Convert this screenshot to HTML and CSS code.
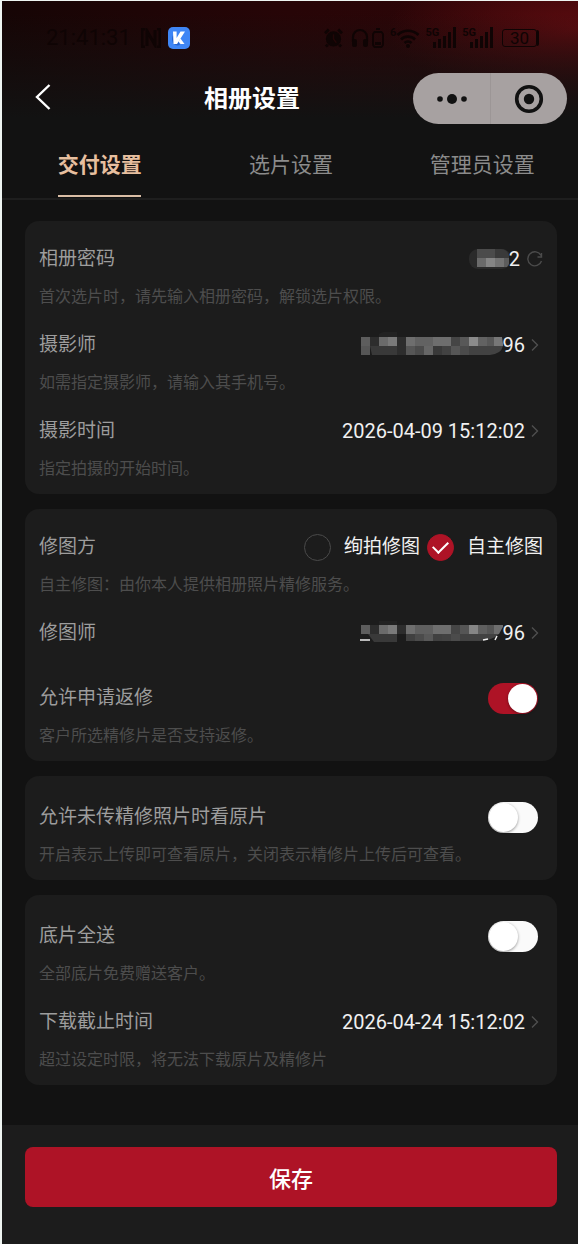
FILE: index.html
```html
<!DOCTYPE html>
<html lang="zh-CN">
<head>
<meta charset="utf-8">
<meta name="viewport" content="width=device-width, initial-scale=1">
<title>相册设置</title>
<link rel="stylesheet" href="styles.css">
</head>
<body>
<svg class="defs" aria-hidden="true">
  <symbol id="chevron" viewBox="0 0 8 14"><path d="M1 1.5 6.5 7 1 12.5" fill="none" stroke="currentColor" stroke-width="1.4"/></symbol>
  <symbol id="signal" viewBox="0 0 23 21"><path d="M0 15h3v6H0zM5 12h3v9H5zM10 9h3v12h-3zM15 5h3v16h-3zM20 0h3v21h-3z" fill="currentColor"/></symbol>
</svg>
<div class="page">
  <header class="top">
    <div class="status">
      <span class="clock">21:41:31</span>
      <svg class="nfc" viewBox="0 0 20 20" width="20" height="20"><path d="M4 1H1v18h3M16 1h3v18h-3M6 18V3l8 14V2" fill="none" stroke="currentColor" stroke-width="3"/></svg>
      <svg class="app" viewBox="0 0 22 22" width="22" height="22"><rect width="22" height="22" rx="5" fill="#3f86f5"/><path d="M5 8c-3 6 1 12 7 10l-2-4z" fill="#2563cf"/><path d="M5 4.500h3.600v6.500L12.500 4.500H17L9 17H5.500z" fill="#fff"/><path d="m12.500 11.500 4 5.500h-4l-2-2.500z" fill="#fff"/></svg>
      <div class="indicators">
        <svg class="alarm" viewBox="0 0 20 20" width="19" height="20"><circle cx="10" cy="11" r="8" fill="currentColor"/><path d="m1 5 4-4M19 5l-4-4M4 17l-2 2M16 17l2 2" stroke="currentColor" stroke-width="3"/><path d="M10 6v5l3 4" fill="none" stroke="#220607" stroke-width="1.500"/></svg>
        <svg class="phones" viewBox="0 0 18 20" width="18" height="20"><path d="M2 14V9a7 7 0 0 1 14 0v5" fill="none" stroke="currentColor" stroke-width="2.200"/><rect x="1" y="11" width="5" height="8" rx="2" fill="currentColor"/><rect x="12" y="11" width="5" height="8" rx="2" fill="currentColor"/></svg>
        <svg viewBox="0 0 12 20" width="12" height="20"><path d="M4 1h4M2.500 4h7L11 6v11l-1.500 2h-7L1 17V6z" fill="none" stroke="currentColor" stroke-width="1.800"/><path d="M3 14h6v3H3z" fill="currentColor"/></svg>
        <span class="tiny six">6</span>
        <svg class="wifi" viewBox="0 0 24 20" width="24" height="20"><path d="M1.500 7a15 15 0 0 1 21 0M5 11.500a10 10 0 0 1 14 0M8.500 15a5 5 0 0 1 7 0" fill="none" stroke="currentColor" stroke-width="2.600"/><circle cx="12" cy="18" r="2" fill="currentColor"/></svg>
        <span class="cell"><span class="tiny">5G</span><svg width="23" height="21"><use href="#signal"/></svg></span>
        <span class="cell"><span class="tiny">5G</span><svg width="23" height="21"><use href="#signal"/></svg></span>
        <span class="battery">30</span>
      </div>
    </div>
    <nav class="bar">
      <button class="back" type="button" aria-label="返回"><svg viewBox="0 0 18 28" width="18" height="28"><path d="M15.500 2 3 14l12.500 12" fill="none" stroke="#fff" stroke-width="2.400"/></svg></button>
      <h1>相册设置</h1>
      <div class="capsule">
        <button type="button" aria-label="更多"><svg viewBox="0 0 32 12" width="32" height="12"><circle cx="4" cy="6" r="2.800"/><circle cx="16" cy="6" r="5"/><circle cx="28" cy="6" r="2.800"/></svg></button>
        <button type="button" aria-label="关闭"><svg viewBox="0 0 30 30" width="30" height="30"><circle cx="15" cy="15" r="12.300" fill="none" stroke="#111" stroke-width="3.600"/><circle cx="15" cy="15" r="5.200"/></svg></button>
      </div>
    </nav>
  </header>
  <div class="tabs" role="tablist">
    <button class="tab active" type="button" role="tab" aria-selected="true">交付设置</button>
    <button class="tab" type="button" role="tab" aria-selected="false">选片设置</button>
    <button class="tab" type="button" role="tab" aria-selected="false">管理员设置</button>
  </div>
  <main>
    <section class="card">
      <div class="item">
        <div class="head"><span class="label">相册密码</span>
          <span class="value code">
            <svg class="mosaic" viewBox="0 0 40 26" width="40" height="26"><rect y="3" width="42" height="20" rx="9" fill="#2a2a2a"/><path d="M8 3h18v9H8z" fill="#4b4b4b"/><path d="M26 3h6a8 8 0 0 1 8 8v1H26z" fill="#3a3a3a"/><path d="M8 12h9v9H8z" fill="#6a6a6a"/><path d="M17 12h9v9h-9z" fill="#858585"/><path d="M26 12h9v9h-9z" fill="#737373"/><path d="M35 12h5v6l-2 3h-3z" fill="#5c5c5c"/></svg>2
            <button class="refresh" type="button" aria-label="刷新"><svg viewBox="0 0 16 16" width="16" height="16"><path d="M14 4.500A7 7 0 1 0 14.500 10M14.500 2v4h-4" fill="none" stroke="currentColor" stroke-width="1.400"/></svg></button>
          </span></div>
        <p class="hint">首次选片时，请先输入相册密码，解锁选片权限。</p>
      </div>
      <div class="item">
        <div class="head"><span class="label">摄影师</span>
          <button class="value" type="button">
            <svg class="mosaic" viewBox="0 0 144 26" width="144" height="26"><path d="M20 2q6-4 18-2v5H20z" fill="#222"/><path d="M2 5h9v9H2z" fill="#5d5d5d"/><path d="M11 5h9v9h-9zM38 5h9v18h-9z" fill="#2d2d2d"/><path d="M20 5h9v9h-9z" fill="#6b6b6b"/><path d="M29 5h9v9h-9z" fill="#7a7a7a"/><path d="M47 5h9v9h-9zM74 5h18v9H74z" fill="#6e6e6e"/><path d="M56 5h18v9H56zM119 5h9v9h-9z" fill="#626262"/><path d="M92 5h9v9h-9z" fill="#454545"/><path d="M101 5h9v9h-9zM128 5h7v9h-7z" fill="#585858"/><path d="M110 5h9v9h-9z" fill="#8b8b8b"/><path d="M135 5h8l1 7v2h-9z" fill="#777"/><path d="M2 14h9v9H2zM47 14h9v9h-9zM92 14h9v9h-9z" fill="#565656"/><path d="M11 14h27v9H13zM74 14h9v9h-9z" fill="#393939"/><path d="M56 14h9v9h-9zM101 14h9v9h-9z" fill="#4b4b4b"/><path d="M65 14h9v9h-9z" fill="#666"/><path d="M83 14h9v9h-9zM110 14h34q-2 8-13 9h-21z" fill="#424242"/></svg>96
            <svg class="arrow" width="8" height="14"><use href="#chevron"/></svg>
          </button></div>
        <p class="hint">如需指定摄影师，请输入其手机号。</p>
      </div>
      <div class="item">
        <div class="head"><span class="label">摄影时间</span>
          <button class="value" type="button">2026-04-09 15:12:02<svg class="arrow" width="8" height="14"><use href="#chevron"/></svg></button></div>
        <p class="hint">指定拍摄的开始时间。</p>
      </div>
    </section>
    <section class="card">
      <div class="item">
        <div class="head"><span class="label">修图方</span>
          <div class="choices">
            <label><input type="radio" name="retoucher">绚拍修图</label>
            <label><input type="radio" name="retoucher" checked>自主修图</label>
          </div></div>
        <p class="hint">自主修图：由你本人提供相册照片精修服务。</p>
      </div>
      <div class="item plain">
        <div class="head"><span class="label">修图师</span>
          <button class="value" type="button">
            <svg class="mosaic" viewBox="0 0 144 26" width="144" height="26"><path d="M20 1h18v4H20z" fill="#222"/><path d="M2 5h9v9H2z" fill="#5d5d5d"/><path d="M11 5h9v9h-9zM38 5h9v9h-9z" fill="#2d2d2d"/><path d="M20 5h9v9h-9z" fill="#6b6b6b"/><path d="M29 5h9v9h-9z" fill="#7a7a7a"/><path d="M47 5h9v9h-9zM74 5h18v9H74z" fill="#6e6e6e"/><path d="M56 5h18v9H56zM119 5h9v9h-9z" fill="#5f5f5f"/><path d="M92 5h9v9h-9z" fill="#454545"/><path d="M101 5h9v9h-9zM128 5h7v9h-7z" fill="#555"/><path d="M110 5h9v9h-9z" fill="#858585"/><path d="M135 5h10l-5 9h-5z" fill="#6e6e6e"/><path d="M9 14h29v8H15z" fill="#393939"/><path d="M47 14h9v7h-9zM74 14h9v7h-9z" fill="#404040"/><path d="M56 14h9v7h-9zM92 14h9v7h-9z" fill="#4b4b4b"/><path d="M65 14h9v7h-9z" fill="#585858"/><path d="M83 14h9v7h-9zM101 14h39q-6 6-19 7h-20z" fill="#424242"/><path d="M1 20h10M124 20l5-1M136 20l2-4" stroke="#eee" stroke-width="1.500"/></svg>96
            <svg class="arrow" width="8" height="14"><use href="#chevron"/></svg>
          </button></div>
      </div>
      <div class="item toggle">
        <div class="head"><label class="label" for="rework">允许申请返修</label><input class="switch" id="rework" type="checkbox" role="switch" checked></div>
        <p class="hint">客户所选精修片是否支持返修。</p>
      </div>
    </section>
    <section class="card">
      <div class="item toggle">
        <div class="head"><label class="label" for="original">允许未传精修照片时看原片</label><input class="switch" id="original" type="checkbox" role="switch"></div>
        <p class="hint">开启表示上传即可查看原片，关闭表示精修片上传后可查看。</p>
      </div>
    </section>
    <section class="card">
      <div class="item toggle">
        <div class="head"><label class="label" for="gift">底片全送</label><input class="switch" id="gift" type="checkbox" role="switch"></div>
        <p class="hint">全部底片免费赠送客户。</p>
      </div>
      <div class="item">
        <div class="head"><span class="label">下载截止时间</span>
          <button class="value" type="button">2026-04-24 15:12:02<svg class="arrow" width="8" height="14"><use href="#chevron"/></svg></button></div>
        <p class="hint">超过设定时限，将无法下载原片及精修片</p>
      </div>
    </section>
  </main>
  <footer><button class="save" type="button">保存</button></footer>
</div>
</body>
</html>
```
FILE: styles.css
```css
* { box-sizing: border-box; }
body {
  margin: 0;
  padding: 1px 0 0 2px;
  background: #eef4f1;
  font-family: Roboto, "Noto Sans CJK SC", sans-serif;
}
button { margin: 0; padding: 0; border: 0; background: none; color: inherit; font: inherit; }
h1, p { margin: 0; }
svg { display: block; flex: none; }
.defs { display: none; }
.page {
  display: flex;
  flex-direction: column;
  min-height: calc(100vh - 1px);
  background: #121212;
}

.top {
  background:
    linear-gradient(to bottom, transparent 10%, #121212 96%),
    radial-gradient(ellipse 190px 70px at 100% 28px, #5c0b0f, transparent),
    linear-gradient(to right, #160505, #270507 50%, #300608);
}
.status {
  display: flex;
  align-items: center;
  height: 72px;
  padding: 1px 41px 0 44px;
  color: #0f0404;
}
.clock { width: 86px; font-size: 22px; }
.nfc { margin-left: 9px; }
.app { margin-left: 7px; }
.indicators { display: flex; align-items: center; margin-left: auto; }
.alarm { margin-right: 8px; }
.phones { margin-right: 3px; }
.tiny { font-size: 11px; line-height: 11px; font-weight: 700; }
.six { align-self: flex-start; margin-left: 6px; }
.wifi { margin-right: 5px; }
.cell { display: flex; margin-right: 6px; }
.cell .tiny { margin-right: -6px; }
.battery {
  width: 35px;
  margin-left: 3px;
  border: 1px solid;
  border-radius: 3px;
  box-shadow: 3px 0 0 -1px #0f0404;
  font-size: 17px;
  line-height: 16px;
  text-align: center;
}
.bar {
  display: grid;
  grid-template-columns: 89px 1fr 154px;
  align-items: center;
  height: 50px;
  padding-right: 11px;
}
.back { justify-self: start; margin: 0 0 4px 32px; }
h1 { color: #fff; font-size: 24px; line-height: 32px; font-weight: 700; text-align: center; }
.capsule { display: grid; grid-template-columns: 1fr 1fr; height: 51px; border-radius: 26px; background: #a7a1a1; }
.capsule button { display: grid; place-items: center; color: #111; }
.capsule svg { fill: #111; }
.capsule button + button { border-left: 1px solid #9c9696; }

.tabs { display: flex; height: 77px; padding: 22px 0 0 2px; border-bottom: 2px solid #1e1e1e; }
.tab { flex: 1; display: flex; flex-direction: column; align-items: center; color: #8b8b8b; font-size: 21px; line-height: 40px; }
.tab.active { color: #e7bf9f; font-weight: 700; }
.tab.active::after { content: ""; width: 83px; height: 2px; margin-top: 10px; background: #d9bda5; }

main { display: flex; flex-direction: column; gap: 15px; padding: 21px 21px 40px 23px; }
.card { display: flex; flex-direction: column; gap: 24px; padding: 25px 14px 14px; border-radius: 14px; background: #1c1c1c; }
.head { display: flex; align-items: center; justify-content: space-between; height: 26px; }
.label { color: #9d9d9d; font-size: 19px; line-height: 26px; }
.hint { margin-top: 14px; color: #4d4d4d; font-size: 16px; line-height: 22px; }
.plain { padding-bottom: 12px; }
.toggle .head { height: 32px; }
.toggle .hint { margin-top: 11px; }

.value { display: flex; align-items: center; margin-right: 4px; color: #f0f0f0; font-size: 20px; line-height: 26px; }
.arrow { margin-left: 6px; color: #4f4f4f; }
.code { margin-right: 0; }
.refresh { margin-left: 7px; color: #4b4b4b; }

.choices { display: flex; gap: 7px; color: #f0f0f0; font-size: 19px; line-height: 26px; }
.choices label { display: flex; align-items: center; gap: 13px; }
input { appearance: none; margin: 0; flex: none; }
input[type="radio"] { display: grid; place-items: center; width: 27px; height: 27px; border: 1px solid #4a4a4a; border-radius: 50%; }
input[type="radio"]:checked { border-color: #ae1326; background: #ae1326; }
input[type="radio"]:checked::after {
  content: "";
  width: 13px;
  height: 7px;
  margin-bottom: 4px;
  border: solid #fff;
  border-width: 0 0 2px 2px;
  transform: rotate(-45deg);
}
.switch { display: flex; align-items: center; width: 50px; height: 31px; margin-right: 5px; padding: 0 1px; border-radius: 16px; background: #fafafa; }
.switch::after { content: ""; width: 29px; height: 29px; border-radius: 50%; background: #fff; box-shadow: 0 1px 3px #0006; }
.switch:checked { justify-content: flex-end; background: #ae1326; }

footer { flex: 1; padding: 22px 21px 36px 23px; background: #1c1c1c; }
.save { display: block; width: 100%; height: 60px; border-radius: 8px; background: #ae1326; color: #fff; font-size: 22px; font-weight: 500; }
```
